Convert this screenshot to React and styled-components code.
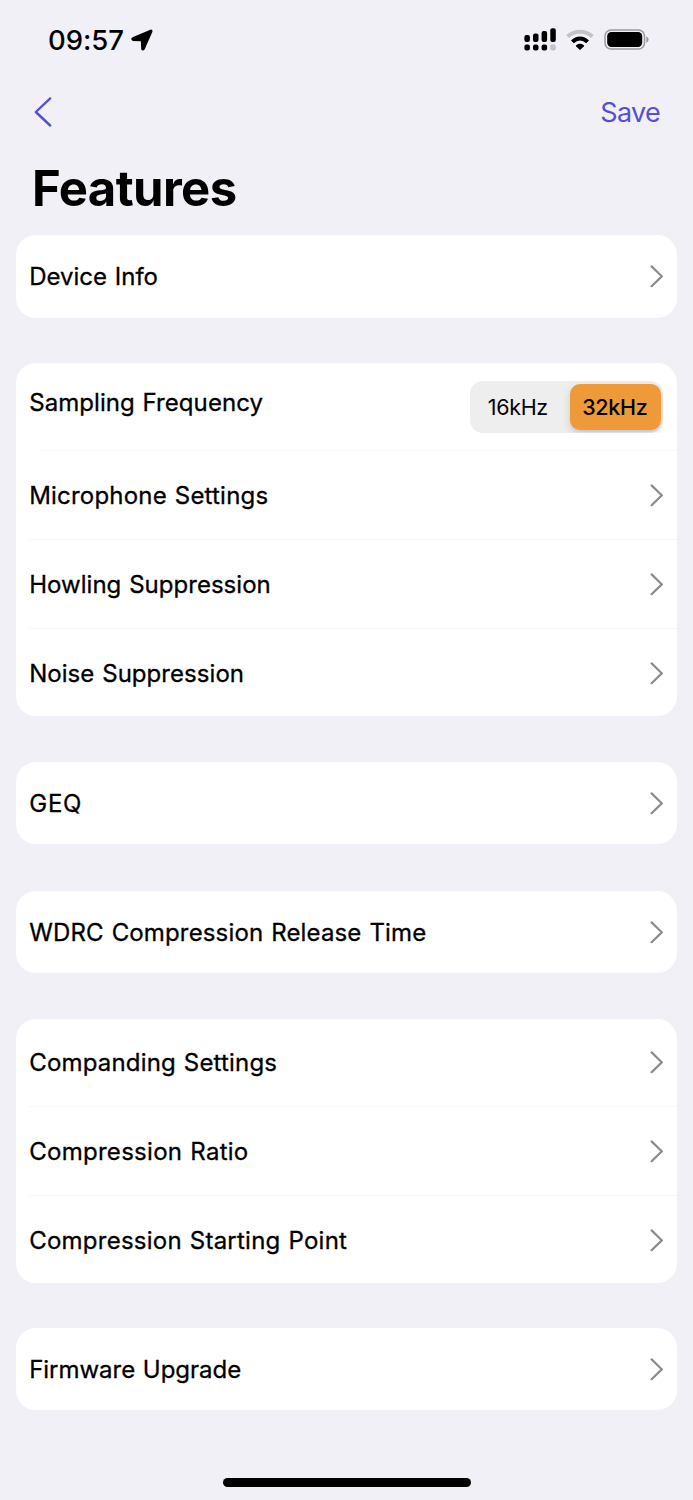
import React, { useState } from "react";
import styled, { createGlobalStyle } from "styled-components";

const GlobalStyle = createGlobalStyle`
  * { box-sizing: border-box; }
  body {
    margin: 0;
    background: #f1f0f6;
    color: #000;
    font-family: Inter, "Liberation Sans", sans-serif;
    -webkit-font-smoothing: antialiased;
  }
`;

const Screen = styled.div`
  display: flex;
  flex-direction: column;
  width: 693px;
  height: 1500px;
  background: #f1f0f6;
  overflow: hidden;
`;

const StatusBar = styled.header`
  display: flex;
  align-items: center;
  justify-content: space-between;
  height: 80px;
  padding: 0 43px 0 48px;
`;

const StatusGroup = styled.div`
  display: flex;
  align-items: center;
  gap: ${(p) => p.$gap}px;
`;

const Clock = styled.span`
  font-size: 27.5px;
  font-weight: 550;
  line-height: 34px;
  letter-spacing: -0.05px;
`;

const NavBar = styled.nav`
  display: flex;
  align-items: center;
  justify-content: space-between;
  height: 64px;
  padding: 0 33px 0 33px;
`;

const NavButton = styled.button`
  display: flex;
  padding: ${(p) => p.$drop || 0}px 0 0;
  border: 0;
  background: none;
  color: #5450d4;
  font-family: inherit;
  font-size: 27px;
  line-height: 34px;
  letter-spacing: -0.7px;
`;

const Title = styled.h1`
  height: 91px;
  margin: 0;
  padding: 16px 0 0 32px;
  font-size: 49px;
  font-weight: 700;
  line-height: 58px;
  letter-spacing: -0.6px;
`;

const Content = styled.main`
  display: flex;
  flex-direction: column;
  padding: 0 16.5px 0 16.4px;
`;

const Card = styled.section`
  display: flex;
  flex-direction: column;
  height: ${(p) => p.$height}px;
  margin-bottom: ${(p) => p.$after}px;
  border-radius: 20px;
  background: #fff;
  overflow: hidden;
`;

const Row = styled.div`
  display: flex;
  ${(p) => (p.$height ? `height: ${p.$height}px; flex: none;` : "flex: 1 1 0;")}
  align-items: center;
  justify-content: space-between;
  padding: 0 13.2px 0 12.8px;
`;

const Divider = styled.div`
  flex: none;
  height: 1px;
  margin-left: ${(p) => p.$inset}px;
  background: #f7f7f7;
`;

const Label = styled.span`
  font-size: 24px;
  font-weight: 400;
  -webkit-text-stroke: 0.3px #000;
  line-height: 34px;
  letter-spacing: ${(p) => p.$spacing}px;
  word-spacing: 1px;
  white-space: nowrap;
  padding-top: ${(p) => p.$drop || 0}px;
  padding-bottom: ${(p) => p.$lift || 0}px;
`;

const Segmented = styled.div`
  display: flex;
  width: 193.5px;
  height: 52px;
  padding: 3px;
  border-radius: 13px;
  background: #eee;
`;

const Segment = styled.button`
  flex: none;
  width: ${(p) => (p.$active ? 91 : 97)}px;
  padding: 0 ${(p) => (p.$active ? 1 : 7)}px 0 0;
  border: 0;
  border-radius: 10px;
  background: ${(p) => (p.$active ? "#ef9a38" : "transparent")};
  box-shadow: ${(p) => (p.$active ? "0 4px 10px rgba(0,0,0,0.13), 0 2px 2px rgba(0,0,0,0.05)" : "none")};
  clip-path: inset(-3px -3px -3px -16px);
  color: #000;
  font-family: inherit;
  font-size: 21.5px;
  font-weight: ${(p) => (p.$active ? 500 : 400)};
  letter-spacing: -0.3px;
`;

const HomeArea = styled.footer`
  display: flex;
  justify-content: center;
  padding-top: 68px;
`;

const HomeIndicator = styled.div`
  width: 248px;
  height: 8.5px;
  border-radius: 5px;
  background: #000;
`;

const LocationIcon = () => (
  <svg width="22" height="22" viewBox="0 0 22 22">
    <path d="M19.6 1.5 1.8 9.1Q.2 10.1 2 11.1l8.6.3.4 8.6q.8 1.4 1.9.1L20.6 2.6Q21 .9 19.6 1.5Z" fill="#000" stroke="#000" strokeWidth="1.6" strokeLinejoin="round" />
  </svg>
);

const SignalIcon = () => (
  <svg width="32" height="24" viewBox="0 0 32 24">
    <rect x="0.4" y="7" width="5.5" height="7" rx="2" />
    <rect x="9" y="5.5" width="5.5" height="8.5" rx="2" />
    <rect x="17.6" y="3" width="5.5" height="11" rx="2" />
    <rect x="26.3" y="0.2" width="5.5" height="13.8" rx="2" />
    <rect x="0.4" y="16.4" width="5.5" height="6.2" rx="2" />
    <rect x="9" y="16.4" width="5.5" height="6.2" rx="2" />
    <rect x="17.6" y="16.4" width="5.5" height="6.2" rx="2" />
    <rect x="26.3" y="16.4" width="5.5" height="6.2" rx="2" fill="#c3c2c8" />
  </svg>
);

const WifiIcon = () => (
  <svg width="28" height="22" viewBox="0 0 28 22">
    <g fill="none" strokeWidth="4">
      <path d="M1.6 7.5Q7 2.8 14 2.8t12.4 4.7" stroke="#c3c2c8" />
      <path d="M6.4 12.9Q9.8 9.6 14 9.6t7.6 3.3" stroke="#000" />
    </g>
    <path d="M10.2 16.3q3.8-2.9 7.6 0 .6.6 0 1.2l-3.2 3.1q-.6.5-1.2 0l-3.2-3.1q-.6-.6 0-1.2Z" />
  </svg>
);

const BatteryIcon = () => (
  <svg width="46" height="22" viewBox="0 0 46 22">
    <rect x="1" y="0.9" width="39.5" height="19.2" rx="6" fill="none" stroke="#9b9aa0" strokeWidth="1.5" />
    <rect x="3.2" y="3.1" width="35" height="14.8" rx="4.2" />
    <path d="M42.3 7.3q2.3 1.2 2.3 3.3t-2.3 3.3Z" fill="#9b9aa0" />
  </svg>
);

const BackIcon = () => (
  <svg width="21" height="32" viewBox="0 0 21 32" fill="none" stroke="currentColor" strokeWidth="2.4" strokeLinecap="round" strokeLinejoin="round">
    <path d="M17.2 2.4 2.8 16l14.4 13.5" />
  </svg>
);

const Chevron = () => (
  <svg width="14" height="24" viewBox="0 0 14 24" fill="none" stroke="#8b8b8d" strokeWidth="2.2" strokeLinecap="round">
    <path d="m2.6 2.4 10.2 9.9L2.6 22.2" />
  </svg>
);

const LinkRow = ({ label, spacing, height }) => (
  <Row $height={height}>
    <Label $spacing={spacing} $drop={2}>{label}</Label>
    <Chevron />
  </Row>
);

const FrequencyRow = ({ height }) => {
  const [value, setValue] = useState("32kHz");
  return (
    <Row $height={height}>
      <Label $spacing={0.06} $lift={8}>Sampling Frequency</Label>
      <Segmented>
        {["16kHz", "32kHz"].map((option) => (
          <Segment key={option} $active={value === option} onClick={() => setValue(option)}>
            {option}
          </Segment>
        ))}
      </Segmented>
    </Row>
  );
};

export default function App() {
  return (
    <>
      <GlobalStyle />
      <Screen>
        <StatusBar>
          <StatusGroup $gap={7}>
            <Clock>09:57</Clock>
            <LocationIcon />
          </StatusGroup>
          <StatusGroup $gap={10}>
            <SignalIcon />
            <WifiIcon />
            <BatteryIcon />
          </StatusGroup>
        </StatusBar>
        <NavBar>
          <NavButton aria-label="Back"><BackIcon /></NavButton>
          <NavButton $drop={2}>Save</NavButton>
        </NavBar>
        <Title>Features</Title>
        <Content>
          <Card $height={82.5} $after={45.8}>
            <LinkRow label="Device Info" spacing={0} />
          </Card>
          <Card $height={352.4} $after={46}>
            <FrequencyRow height={87} />
            <Divider $inset={24} />
            <LinkRow label="Microphone Settings" spacing={0.2} height={88} />
            <Divider $inset={13} />
            <LinkRow label="Howling Suppression" spacing={0.03} height={88} />
            <Divider $inset={13} />
            <LinkRow label="Noise Suppression" spacing={0.05} height={88} />
          </Card>
          <Card $height={82} $after={47.3}>
            <LinkRow label="GEQ" spacing={0.8} />
          </Card>
          <Card $height={82} $after={46}>
            <LinkRow label="WDRC Compression Release Time" spacing={0.15} />
          </Card>
          <Card $height={263.6} $after={45.4}>
            <LinkRow label="Companding Settings" spacing={0.18} height={87} />
            <Divider $inset={13} />
            <LinkRow label="Compression Ratio" spacing={0.28} height={88} />
            <Divider $inset={13} />
            <LinkRow label="Compression Starting Point" spacing={0.24} height={88} />
          </Card>
          <Card $height={82.5} $after={0}>
            <LinkRow label="Firmware Upgrade" spacing={-0.03} />
          </Card>
        </Content>
        <HomeArea><HomeIndicator /></HomeArea>
      </Screen>
    </>
  );
}
